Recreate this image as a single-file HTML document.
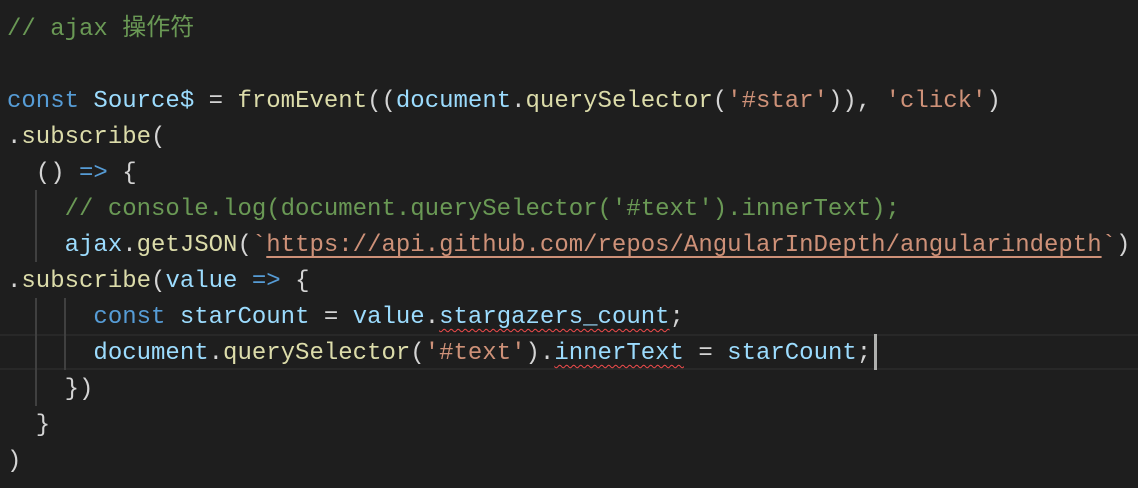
<!DOCTYPE html>
<html><head><meta charset="utf-8"><style>
html,body{margin:0;padding:0;background:#1e1e1e;width:1138px;height:488px;overflow:hidden}
.ed{position:relative;font-family:"Liberation Mono","Noto Sans CJK SC",monospace;font-size:24px;color:#d4d4d4}
.l{position:absolute;left:7px;height:36px;line-height:36px;white-space:pre;margin-top:2px}
.g{position:absolute;width:2px;background:#404040;height:36px}
.c{color:#6a9955}.k{color:#569cd6}.v{color:#9cdcfe}.f{color:#dcdcaa}.s{color:#ce9178}
.u{text-decoration:underline;text-decoration-color:#ce9178;text-underline-offset:5px;text-decoration-thickness:2px}
.w{text-decoration:underline wavy #f14c4c;text-underline-offset:5px;text-decoration-thickness:1px}
.cur{position:absolute;top:334px;left:0;width:1138px;height:32px;border-top:2px solid #282828;border-bottom:2px solid #282828}
.caret{position:absolute;left:874px;top:334px;width:3px;height:36px;background:#aeafad}
</style></head><body><div class="ed">
<div class="cur"></div>
<div class="g" style="left:35px;top:190px"></div><div class="g" style="left:35px;top:226px"></div>
<div class="g" style="left:35px;top:298px"></div><div class="g" style="left:35px;top:334px"></div><div class="g" style="left:35px;top:370px"></div>
<div class="g" style="left:64px;top:298px"></div><div class="g" style="left:64px;top:334px"></div>
<div class="l" style="top:10px"><span class="c">// ajax 操作符</span></div>
<div class="l" style="top:82px"><span class="k">const</span> <span class="v">Source$</span> = <span class="f">fromEvent</span>((<span class="v">document</span>.<span class="f">querySelector</span>(<span class="s">'#star'</span>)), <span class="s">'click'</span>)</div>
<div class="l" style="top:118px">.<span class="f">subscribe</span>(</div>
<div class="l" style="top:154px">  () <span class="k">=&gt;</span> {</div>
<div class="l" style="top:190px">    <span class="c">// console.log(document.querySelector('#text').innerText);</span></div>
<div class="l" style="top:226px">    <span class="v">ajax</span>.<span class="f">getJSON</span>(<span class="s">`<span class="u">https://api.github.com/repos/AngularInDepth/angularindepth</span>`</span>)</div>
<div class="l" style="top:262px">.<span class="f">subscribe</span>(<span class="v">value</span> <span class="k">=&gt;</span> {</div>
<div class="l" style="top:298px">      <span class="k">const</span> <span class="v">starCount</span> = <span class="v">value</span>.<span class="v w">stargazers_count</span>;</div>
<div class="l" style="top:334px">      <span class="v">document</span>.<span class="f">querySelector</span>(<span class="s">'#text'</span>).<span class="v w">innerText</span> = <span class="v">starCount</span>;</div>
<div class="caret"></div>
<div class="l" style="top:370px">    })</div>
<div class="l" style="top:406px">  }</div>
<div class="l" style="top:442px">)</div>
</div></body></html>
